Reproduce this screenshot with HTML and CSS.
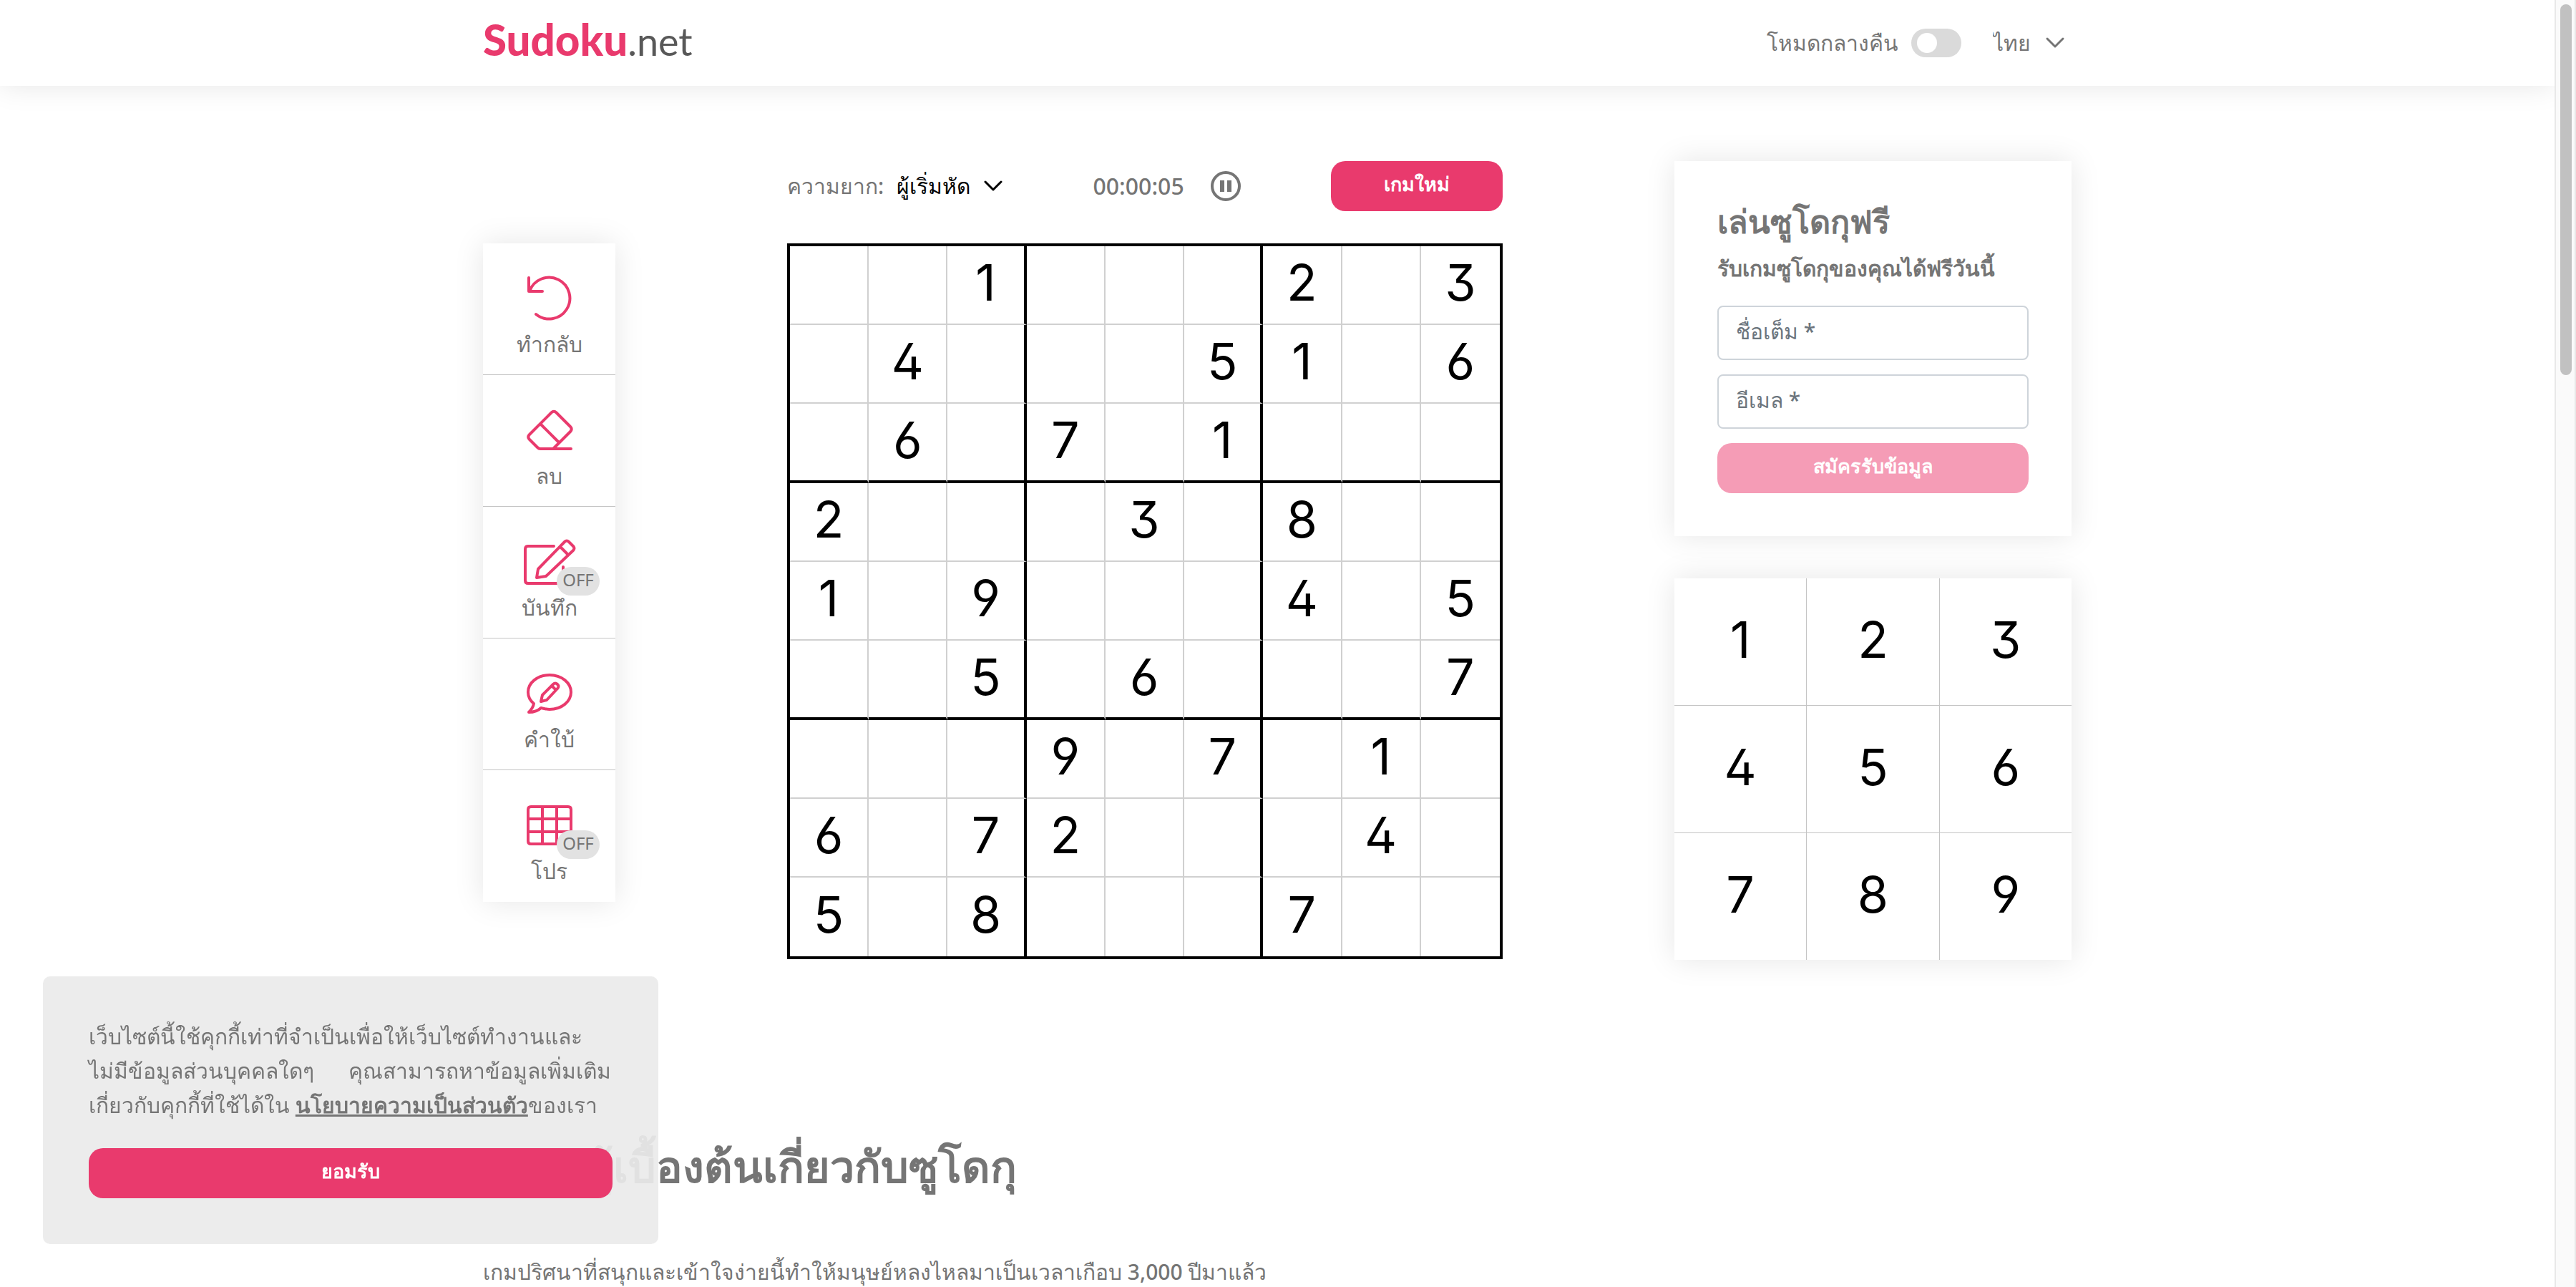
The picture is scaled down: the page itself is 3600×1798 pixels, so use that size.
FILE: index.html
```html
<!DOCTYPE html>
<html lang="th">
<head>
<meta charset="utf-8">
<title>Sudoku.net</title>
<link rel="stylesheet" href="styles.css">
</head>
<body>
<header class="header">
  <div class="container header-row">
    <a class="logo" href="#"><span class="logo-bold">Sudoku</span><span class="logo-thin">.net</span></a>
    <div class="header-tools">
      <label class="night"><span>โหมดกลางคืน</span><input type="checkbox" class="toggle"></label>
      <span class="picker language">
        <select aria-label="ภาษา"><option>ไทย</option></select>
        <svg class="chevron" viewBox="0 0 28 16"><path d="M3 2 14 13 25 2"/></svg>
      </span>
    </div>
  </div>
</header>

<main class="container">
  <section class="game">
    <nav class="tools">
      <button class="tool" type="button">
        <svg class="icon" viewBox="0 0 80 64"><path d="M11 3V22H30M12 22A29 29 0 1 1 21 54"/></svg>
        <span>ทำกลับ</span>
      </button>
      <button class="tool" type="button">
        <svg class="icon" viewBox="0 0 80 64"><path d="M45 58 69 34Q72.500 30.500 69 27L49.500 7.500Q46 4 42.500 7.500L12 38Q8.500 41.500 12 45L23 56Q25 58 27 58H70M28 24 52 48"/></svg>
        <span>ลบ</span>
      </button>
      <button class="tool" type="button">
        <svg class="icon" viewBox="0 0 80 64"><path d="M46 10H10Q6 10 6 14V58Q6 62 10 62H55Q59 62 59 58V39M22 54 24 42 61 4Q64 1 67 4L73 10Q76 13 73 16L35 52ZM55 11 65 21"/></svg>
        <span>บันทึก</span>
        <span class="badge">OFF</span>
      </button>
      <button class="tool" type="button">
        <svg class="icon" viewBox="0 0 80 64"><path d="M18 46C12 41 10 35 10 30 10 17 23 6 40 6S70 17 70 30 57 54 40 54C36 54 32 53 28 52 24 56 17 58 11 58Q17 52 18 46ZM28 43 30 34 45 19Q48 16 51 19 54 22 51 25L36 41ZM43 21 49 27"/></svg>
        <span>คำใบ้</span>
      </button>
      <button class="tool" type="button">
        <svg class="icon" viewBox="0 0 80 64"><path d="M14 6H66Q70 6 70 10V54Q70 58 66 58H14Q10 58 10 54V10Q10 6 14 6ZM30 6V58M50 6V58M10 23H70M10 41H70"/></svg>
        <span>โปร</span>
        <span class="badge">OFF</span>
      </button>
    </nav>

    <div class="play">
      <div class="controls">
        <div class="picker difficulty">
          <label for="level">ความยาก:</label>
          <select id="level"><option>ผู้เริ่มหัด</option></select>
          <svg class="chevron" viewBox="0 0 28 16"><path d="M3 2 14 13 25 2"/></svg>
        </div>
        <div class="clock">
          <time>00:00:05</time>
          <button class="pause" type="button" aria-label="หยุด"><svg viewBox="0 0 44 44"><circle cx="22" cy="22" r="19"/><path class="bars" d="M17 14V30M27 14V30"/></svg></button>
        </div>
        <button class="btn new-game" type="button">เกมใหม่</button>
      </div>
      <table class="board">
        <tr><td></td><td></td><td>1</td><td></td><td></td><td></td><td>2</td><td></td><td>3</td></tr>
        <tr><td></td><td>4</td><td></td><td></td><td></td><td>5</td><td>1</td><td></td><td>6</td></tr>
        <tr><td></td><td>6</td><td></td><td>7</td><td></td><td>1</td><td></td><td></td><td></td></tr>
        <tr><td>2</td><td></td><td></td><td></td><td>3</td><td></td><td>8</td><td></td><td></td></tr>
        <tr><td>1</td><td></td><td>9</td><td></td><td></td><td></td><td>4</td><td></td><td>5</td></tr>
        <tr><td></td><td></td><td>5</td><td></td><td>6</td><td></td><td></td><td></td><td>7</td></tr>
        <tr><td></td><td></td><td></td><td>9</td><td></td><td>7</td><td></td><td>1</td><td></td></tr>
        <tr><td>6</td><td></td><td>7</td><td>2</td><td></td><td></td><td></td><td>4</td><td></td></tr>
        <tr><td>5</td><td></td><td>8</td><td></td><td></td><td></td><td>7</td><td></td><td></td></tr>
      </table>
    </div>

    <aside class="side">
      <form class="signup">
        <h2>เล่นซูโดกุฟรี</h2>
        <p>รับเกมซูโดกุของคุณได้ฟรีวันนี้</p>
        <input type="text" placeholder="ชื่อเต็ม *" aria-label="ชื่อเต็ม">
        <input type="email" placeholder="อีเมล *" aria-label="อีเมล">
        <button class="btn btn-faded" type="button">สมัครรับข้อมูล</button>
      </form>
      <div class="numpad">
        <button type="button">1</button><button type="button">2</button><button type="button">3</button>
        <button type="button">4</button><button type="button">5</button><button type="button">6</button>
        <button type="button">7</button><button type="button">8</button><button type="button">9</button>
      </div>
    </aside>
  </section>

  <article class="about">
    <h1>ความรู้เบื้องต้นเกี่ยวกับซูโดกุ</h1>
    <p>เกมปริศนาที่สนุกและเข้าใจง่ายนี้ทำให้มนุษย์หลงไหลมาเป็นเวลาเกือบ 3,000 ปีมาแล้ว</p>
  </article>
</main>

<div class="cookie" role="dialog" aria-label="คุกกี้">
  <p>เว็บไซต์นี้ใช้คุกกี้เท่าที่จำเป็นเพื่อให้เว็บไซต์ทำงานและ<br>ไม่มีข้อมูลส่วนบุคคลใดๆ <span class="sentence">คุณสามารถหาข้อมูลเพิ่มเติม</span><br>เกี่ยวกับคุกกี้ที่ใช้ได้ใน <a href="#">นโยบายความเป็นส่วนตัว</a>ของเรา</p>
  <button class="btn" type="button">ยอมรับ</button>
</div>

<div class="scrollbar"><div class="thumb"></div></div>
</body>
</html>
```

FILE: styles.css
```css
* {
  box-sizing: border-box;
}

html {
  overflow: hidden;
}

body {
  margin: 0;
  padding-right: 30px;
  background: #fff;
  color: #757575;
  font-family: "Noto Sans", sans-serif;
  font-size: 30px;
  line-height: 48px;
  font-weight: 500;
}

button,
input,
select {
  font: inherit;
  color: inherit;
  border: 0;
  padding: 0;
  margin: 0;
  background: none;
}

h1,
h2,
p {
  margin: 0;
}

svg {
  display: block;
  fill: none;
  stroke: currentColor;
  stroke-width: 4;
  stroke-linecap: round;
  stroke-linejoin: round;
  overflow: visible;
}

.container {
  max-width: 2220px;
  margin: 0 auto;
}

.header {
  background: #fff;
  box-shadow: 0 0 40px rgba(0, 0, 0, 0.1);
}

.header-row {
  height: 120px;
  display: flex;
  align-items: center;
  justify-content: space-between;
}

.logo {
  font-family: Lato, sans-serif;
  font-size: 60px;
  line-height: 72px;
  padding-bottom: 8px;
  color: #585858;
  text-decoration: none;
}

.logo-bold {
  font-weight: 900;
  color: #e93a6d;
}

.logo-thin {
  font-size: 54px;
  font-weight: 400;
}

.header-tools {
  display: flex;
  align-items: center;
  gap: 44px;
}

.night {
  display: flex;
  align-items: center;
  gap: 18px;
}

.toggle {
  appearance: none;
  width: 70px;
  height: 40px;
  border-radius: 20px;
  background: #dadada;
  padding: 6px 8px;
}

.toggle::before {
  content: "";
  display: block;
  width: 28px;
  height: 28px;
  border-radius: 50%;
  background: #fff;
}

.picker {
  display: flex;
  align-items: center;
}

.picker select {
  appearance: none;
}

.language {
  gap: 20px;
  padding-right: 9px;
}

.chevron {
  width: 28px;
  height: 16px;
  stroke-width: 3;
}

.game {
  padding-top: 105px;
  display: grid;
  grid-template-columns: 185fr 1000fr 555fr;
  column-gap: 240px;
  align-items: start;
}

.tools {
  margin-top: 115px;
  box-shadow: 0 0 40px rgba(0, 0, 0, 0.1);
  background: #fff;
}

.tool {
  position: relative;
  width: 100%;
  height: 184px;
  padding-top: 45px;
  display: flex;
  flex-direction: column;
  align-items: center;
  gap: 8px;
  border-bottom: 1px solid #c4c4c4;
}

.tool:last-child {
  border-bottom: 0;
}

.icon {
  width: 80px;
  height: 64px;
  flex: none;
  color: #e93a6d;
}

.badge {
  position: absolute;
  left: 103px;
  top: 84px;
  width: 60px;
  height: 40px;
  border-radius: 20px;
  background: #e2e2e2;
  font-size: 24px;
  font-weight: 400;
  line-height: 36px;
  text-align: center;
}

.controls {
  height: 70px;
  margin-bottom: 45px;
  display: flex;
  align-items: center;
  justify-content: space-between;
}

.difficulty {
  gap: 18px;
  color: #000;
}

.difficulty label {
  color: #757575;
}

.clock {
  display: flex;
  align-items: center;
  gap: 36px;
}

.clock time {
  font-size: 32px;
}

.pause svg {
  width: 44px;
  height: 44px;
}

.bars {
  stroke-width: 6;
  stroke-linecap: butt;
}

.btn {
  display: block;
  width: 100%;
  height: 70px;
  border-radius: 20px;
  background: #e93a6d;
  color: #fff;
  font-size: 27px;
  font-weight: 600;
  padding-bottom: 6px;
}

.new-game {
  width: 240px;
}

.btn-faded {
  background: #f59cb6;
}

.board {
  width: 100%;
  border-collapse: separate;
  border-spacing: 0;
  table-layout: fixed;
  border: 4px solid #000;
}

.board td {
  height: 110px;
  padding: 0;
  border: solid #d0d0d0;
  border-width: 0 2px 2px 0;
  text-align: center;
}

.board td:nth-child(3n) {
  border-right: 4px solid #000;
}

.board tr:nth-child(3n) td {
  height: 111px;
  border-bottom: 4px solid #000;
}

.board td:last-child {
  border-right: 0;
}

.board tr:last-child td {
  height: 110px;
  border-bottom: 0;
}

.board td,
.numpad button {
  color: #000;
  font-family: Inter, sans-serif;
  font-size: 70px;
  font-weight: 400;
  font-feature-settings: "ss01", "cv03", "cv04", "cv09";
  line-height: 80px;
  padding-bottom: 6px;
}

.side {
  display: grid;
  gap: 59px;
}

.signup,
.numpad {
  background: #fff;
  box-shadow: 0 0 40px rgba(0, 0, 0, 0.1);
}

.signup {
  padding: 54px 60px 60px;
}

.signup h2 {
  font-size: 45px;
  line-height: 60px;
  font-weight: 700;
}

.signup p {
  font-weight: 700;
  padding: 12px 0 28px;
}

.signup input {
  display: block;
  width: 100%;
  height: 76px;
  margin-bottom: 20px;
  padding: 0 24px 6px;
  border: 2px solid #ced4da;
  border-radius: 8px;
}

.signup input::placeholder {
  color: #6c757d;
  opacity: 1;
}

.numpad {
  display: grid;
  grid-template-columns: repeat(3, 1fr);
  gap: 1px;
  background: #c4c4c4;
}

.numpad button {
  height: 177px;
  background: #fff;
}

.about {
  padding-top: 248px;
}

.about h1 {
  font-size: 61px;
  line-height: 80px;
  font-weight: 700;
  margin-bottom: 84px;
}

.about p {
  white-space: nowrap;
}

.cookie {
  position: fixed;
  left: 60px;
  bottom: 60px;
  width: 860px;
  padding: 60px 64px 64px;
  border-radius: 10px;
  background: rgba(234, 234, 234, 0.92);
}

.cookie p {
  margin-bottom: 36px;
  white-space: nowrap;
}

.cookie a {
  color: inherit;
  font-weight: 700;
}

.sentence {
  margin-left: 40px;
}

.scrollbar {
  position: fixed;
  top: 0;
  right: 0;
  bottom: 0;
  width: 30px;
  padding: 6px;
  border: solid #e8e8e8;
  border-width: 0 2px;
  background: #fafafa;
}

.thumb {
  width: 16px;
  height: 518px;
  border-radius: 8px;
  background: #c1c1c1;
}
```
